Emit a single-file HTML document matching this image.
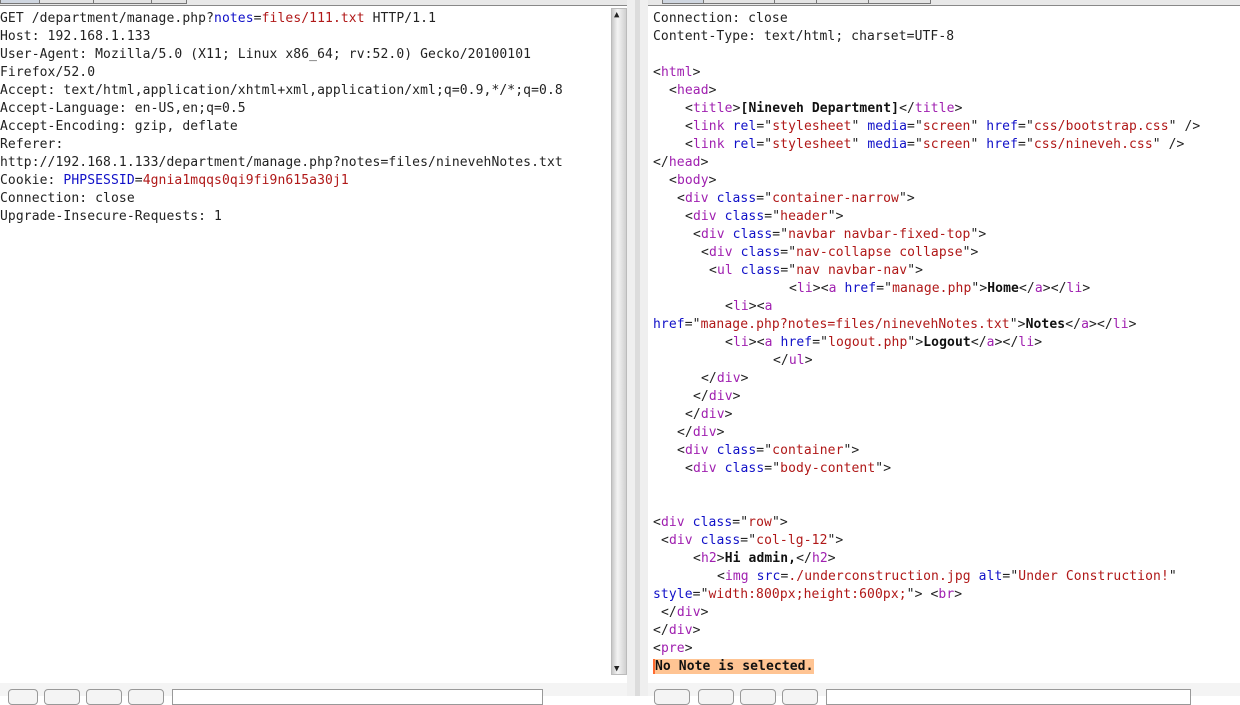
<!DOCTYPE html>
<html><head><style>
body{margin:0;width:1240px;height:696px;background:#fff;position:relative;overflow:hidden;font-family:"DejaVu Sans Mono","Liberation Mono",monospace;font-size:13px;letter-spacing:0.1px;color:#222}
.l{position:absolute;white-space:pre;line-height:18px;height:18px}
.t{color:#a020b0}.a{color:#1010c8}.v{color:#b01818}.b{font-weight:bold;color:#111}
.hl{background:#ffc493;border-left:2px solid #ff6a30;font-weight:bold;color:#111}
.sb{position:absolute;width:14px;background:linear-gradient(90deg,#c8c8c8,#f4f4f4 40%,#d0d0d0);border:1px solid #bbb}
.btn{position:absolute;top:689px;height:14px;border:1px solid #999;border-radius:4px;background:#f4f4f4}
.inp{position:absolute;top:689px;height:14px;border:1px solid #999;background:#fff}
.tab{position:absolute;top:0;height:3px;border:1px solid #777;border-top:none;background:#e4e4e4}
</style></head><body>
<div style="position:absolute;left:0;top:0;width:628px;height:5px;background:#e8e8e8;border-bottom:1px solid #888"></div>
<div class="tab" style="left:0;width:38px;background:#cfd6e0"></div><div class="tab" style="left:39px;width:53px"></div><div class="tab" style="left:93px;width:57px"></div><div class="tab" style="left:151px;width:34px"></div>
<div style="position:absolute;left:648px;top:0;width:592px;height:5px;background:#e8e8e8;border-bottom:1px solid #888"></div>
<div class="tab" style="left:662px;width:40px;background:#cfd6e0"></div><div class="tab" style="left:703px;width:70px"></div><div class="tab" style="left:774px;width:41px"></div><div class="tab" style="left:816px;width:51px"></div><div class="tab" style="left:868px;width:61px"></div>
<div style="position:absolute;left:627px;top:0;width:21px;height:696px;background:#efefef"></div>
<div style="position:absolute;left:635px;top:0;width:5px;height:696px;background:#dcdcdc"></div>
<div style="position:absolute;left:0;top:683px;width:627px;height:13px;background:#f4f4f4"></div>
<div style="position:absolute;left:648px;top:683px;width:592px;height:13px;background:#f4f4f4"></div>
<div class="sb" style="left:611px;top:8px;height:665px"></div>
<div style="position:absolute;left:614px;top:10px;font-size:9px;color:#222">▲</div>
<div style="position:absolute;left:614px;top:664px;font-size:9px;color:#222">▼</div>
<div class="btn" style="left:8px;width:28px"></div><div class="btn" style="left:44px;width:34px"></div><div class="btn" style="left:86px;width:34px"></div><div class="btn" style="left:128px;width:34px"></div>
<div class="inp" style="left:172px;width:369px"></div>
<div class="btn" style="left:654px;width:34px"></div><div class="btn" style="left:698px;width:34px"></div><div class="btn" style="left:740px;width:34px"></div><div class="btn" style="left:782px;width:34px"></div>
<div class="inp" style="left:826px;width:363px"></div>

<div class="l" style="left:0;top:10px">GET /department/manage.php?<span class="a">notes</span>=<span class="v">files/111.txt</span> HTTP/1.1</div>
<div class="l" style="left:0;top:28px">Host: 192.168.1.133</div>
<div class="l" style="left:0;top:46px">User-Agent: Mozilla/5.0 (X11; Linux x86_64; rv:52.0) Gecko/20100101</div>
<div class="l" style="left:0;top:64px">Firefox/52.0</div>
<div class="l" style="left:0;top:82px">Accept: text/html,application/xhtml+xml,application/xml;q=0.9,*/*;q=0.8</div>
<div class="l" style="left:0;top:100px">Accept-Language: en-US,en;q=0.5</div>
<div class="l" style="left:0;top:118px">Accept-Encoding: gzip, deflate</div>
<div class="l" style="left:0;top:136px">Referer:</div>
<div class="l" style="left:0;top:154px">http://192.168.1.133/department/manage.php?notes=files/ninevehNotes.txt</div>
<div class="l" style="left:0;top:172px">Cookie: <span class="a">PHPSESSID</span>=<span class="v">4gnia1mqqs0qi9fi9n615a30j1</span></div>
<div class="l" style="left:0;top:190px">Connection: close</div>
<div class="l" style="left:0;top:208px">Upgrade-Insecure-Requests: 1</div>

<div class="l" style="left:653px;top:10px">Connection: close</div>
<div class="l" style="left:653px;top:28px">Content-Type: text/html; charset=UTF-8</div>
<div class="l" style="left:653px;top:64px">&lt;<span class="t">html</span>&gt;</div>
<div class="l" style="left:669px;top:82px">&lt;<span class="t">head</span>&gt;</div>
<div class="l" style="left:685px;top:100px">&lt;<span class="t">title</span>&gt;<span class="b">[Nineveh Department]</span>&lt;/<span class="t">title</span>&gt;</div>
<div class="l" style="left:685px;top:118px">&lt;<span class="t">link</span> <span class="a">rel</span>="<span class="v">stylesheet</span>" <span class="a">media</span>="<span class="v">screen</span>" <span class="a">href</span>="<span class="v">css/bootstrap.css</span>" /&gt;</div>
<div class="l" style="left:685px;top:136px">&lt;<span class="t">link</span> <span class="a">rel</span>="<span class="v">stylesheet</span>" <span class="a">media</span>="<span class="v">screen</span>" <span class="a">href</span>="<span class="v">css/nineveh.css</span>" /&gt;</div>
<div class="l" style="left:653px;top:154px">&lt;/<span class="t">head</span>&gt;</div>
<div class="l" style="left:669px;top:172px">&lt;<span class="t">body</span>&gt;</div>
<div class="l" style="left:677px;top:190px">&lt;<span class="t">div</span> <span class="a">class</span>="<span class="v">container-narrow</span>"&gt;</div>
<div class="l" style="left:685px;top:208px">&lt;<span class="t">div</span> <span class="a">class</span>="<span class="v">header</span>"&gt;</div>
<div class="l" style="left:693px;top:226px">&lt;<span class="t">div</span> <span class="a">class</span>="<span class="v">navbar navbar-fixed-top</span>"&gt;</div>
<div class="l" style="left:701px;top:244px">&lt;<span class="t">div</span> <span class="a">class</span>="<span class="v">nav-collapse collapse</span>"&gt;</div>
<div class="l" style="left:709px;top:262px">&lt;<span class="t">ul</span> <span class="a">class</span>="<span class="v">nav navbar-nav</span>"&gt;</div>
<div class="l" style="left:789px;top:280px">&lt;<span class="t">li</span>&gt;&lt;<span class="t">a</span> <span class="a">href</span>="<span class="v">manage.php</span>"&gt;<span class="b">Home</span>&lt;/<span class="t">a</span>&gt;&lt;/<span class="t">li</span>&gt;</div>
<div class="l" style="left:725px;top:298px">&lt;<span class="t">li</span>&gt;&lt;<span class="t">a</span></div>
<div class="l" style="left:653px;top:316px"><span class="a">href</span>="<span class="v">manage.php?notes=files/ninevehNotes.txt</span>"&gt;<span class="b">Notes</span>&lt;/<span class="t">a</span>&gt;&lt;/<span class="t">li</span>&gt;</div>
<div class="l" style="left:725px;top:334px">&lt;<span class="t">li</span>&gt;&lt;<span class="t">a</span> <span class="a">href</span>="<span class="v">logout.php</span>"&gt;<span class="b">Logout</span>&lt;/<span class="t">a</span>&gt;&lt;/<span class="t">li</span>&gt;</div>
<div class="l" style="left:773px;top:352px">&lt;/<span class="t">ul</span>&gt;</div>
<div class="l" style="left:701px;top:370px">&lt;/<span class="t">div</span>&gt;</div>
<div class="l" style="left:693px;top:388px">&lt;/<span class="t">div</span>&gt;</div>
<div class="l" style="left:685px;top:406px">&lt;/<span class="t">div</span>&gt;</div>
<div class="l" style="left:677px;top:424px">&lt;/<span class="t">div</span>&gt;</div>
<div class="l" style="left:677px;top:442px">&lt;<span class="t">div</span> <span class="a">class</span>="<span class="v">container</span>"&gt;</div>
<div class="l" style="left:685px;top:460px">&lt;<span class="t">div</span> <span class="a">class</span>="<span class="v">body-content</span>"&gt;</div>
<div class="l" style="left:653px;top:514px">&lt;<span class="t">div</span> <span class="a">class</span>="<span class="v">row</span>"&gt;</div>
<div class="l" style="left:661px;top:532px">&lt;<span class="t">div</span> <span class="a">class</span>="<span class="v">col-lg-12</span>"&gt;</div>
<div class="l" style="left:693px;top:550px">&lt;<span class="t">h2</span>&gt;<span class="b">Hi admin,</span>&lt;/<span class="t">h2</span>&gt;</div>
<div class="l" style="left:717px;top:568px">&lt;<span class="t">img</span> <span class="a">src</span>=<span class="v">./underconstruction.jpg</span> <span class="a">alt</span>="<span class="v">Under Construction!</span>"</div>
<div class="l" style="left:653px;top:586px"><span class="a">style</span>="<span class="v">width:800px;height:600px;</span>"&gt; &lt;<span class="t">br</span>&gt;</div>
<div class="l" style="left:661px;top:604px">&lt;/<span class="t">div</span>&gt;</div>
<div class="l" style="left:653px;top:622px">&lt;/<span class="t">div</span>&gt;</div>
<div class="l" style="left:653px;top:640px">&lt;<span class="t">pre</span>&gt;</div>
<div class="l" style="left:653px;top:658px"><span class="hl">No Note is selected.</span></div>
</body></html>
